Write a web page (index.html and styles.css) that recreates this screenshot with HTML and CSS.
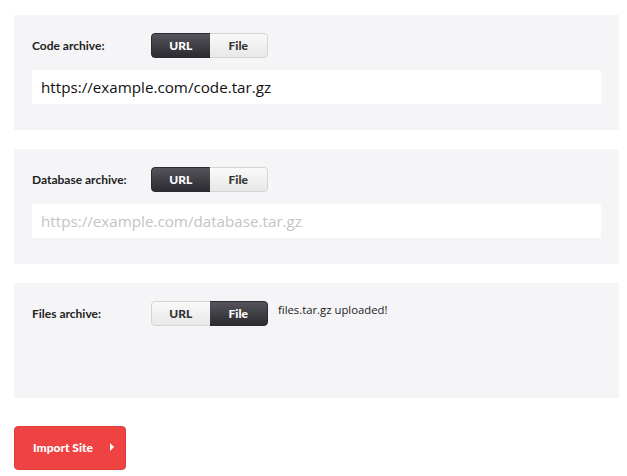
FILE: index.html
```html
<!DOCTYPE html>
<html>
<head>
<meta charset="utf-8">
<link rel="stylesheet" href="styles.css">
</head>
<body>
<div class="page">
  <section class="panel">
    <div class="row">
      <label class="label">Code archive:</label>
      <div class="toggle">
        <span class="seg active">URL</span>
        <span class="seg">File</span>
      </div>
    </div>
    <div class="input">https://example.com/code.tar.gz</div>
  </section>
  <section class="panel">
    <div class="row">
      <label class="label">Database archive:</label>
      <div class="toggle">
        <span class="seg active">URL</span>
        <span class="seg">File</span>
      </div>
    </div>
    <div class="input placeholder">https://example.com/database.tar.gz</div>
  </section>
  <section class="panel">
    <div class="row">
      <label class="label">Files archive:</label>
      <div class="toggle">
        <span class="seg">URL</span>
        <span class="seg active">File</span>
      </div>
      <span class="status">files.tar.gz uploaded!</span>
    </div>
    <div class="input-space"></div>
  </section>
  <button class="import">Import Site <span class="caret"></span></button>
</div>
</body>
</html>
```
FILE: styles.css
```css
html, body { margin: 0; padding: 0; background: #fff; }
body { font-family: "Open Sans", "Liberation Sans", sans-serif; color: #222; }
.page { padding: 15px 8px 0 14px; display: flex; flex-direction: column; gap: 19px; align-items: flex-start; }
.panel { align-self: stretch; background: #f5f5f7; padding: 18px 18px 26px 18px; display: flex; flex-direction: column; gap: 12px; }
.row { display: flex; align-items: center; height: 25px; }
.label { width: 119px; font-family: "Lato", "Open Sans", sans-serif; font-weight: 700; font-size: 12px; color: #222; }
.toggle { display: flex; height: 25px; width: 117px; border-radius: 4px; overflow: hidden; box-sizing: border-box; }
.seg { flex: 1; display: flex; align-items: center; justify-content: center; font-family: "Lato", "Open Sans", sans-serif; font-weight: 900; font-size: 12px; color: #333; background: linear-gradient(#f9f9f9, #e8e8e8); border: 1px solid #d4d4d4; }
.seg:first-child { border-radius: 4px 0 0 4px; border-right: none; }
.seg:last-child { border-radius: 0 4px 4px 0; border-left: none; }
.seg.active { background: linear-gradient(#55545c, #2c2b31); color: #fff; border-color: #2c2b31; }
.status { margin-left: 10px; font-size: 11.3px; color: #222; align-self: flex-start; margin-top: 1px; }
.input { height: 34px; background: #fff; display: flex; align-items: center; padding: 0 9px; font-size: 15.2px; color: #111; }
.input.placeholder { color: #c4c4c4; }
.input-space { height: 34px; }
.import { margin-top: 9px; height: 44px; width: 112px; background: #ef4343; border: 1px solid #e03c3c; border-radius: 4px; color: #fff; font-family: "Lato", "Open Sans", sans-serif; font-weight: 900; font-size: 12px; display: flex; align-items: center; padding: 0 0 2px 18px; cursor: pointer; }
.caret { margin-left: 17px; width: 0; height: 0; border-left: 4px solid #fff; border-top: 4px solid transparent; border-bottom: 4px solid transparent; }
```
